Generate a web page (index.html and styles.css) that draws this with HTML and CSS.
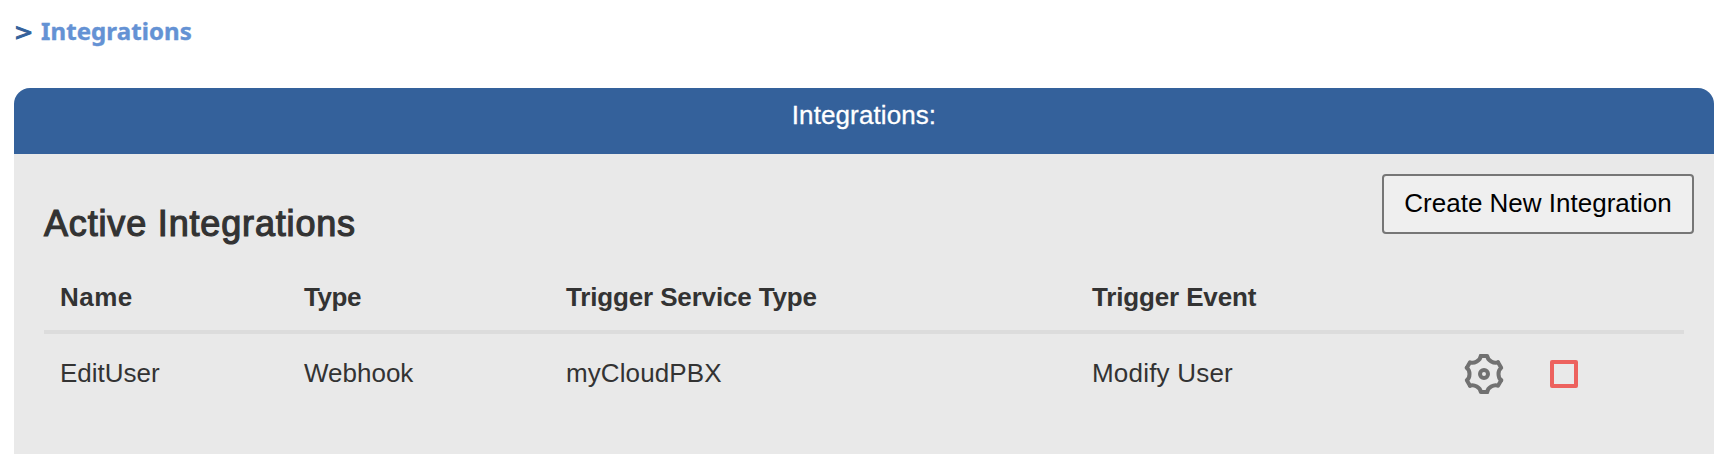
FILE: index.html
```html
<!DOCTYPE html>
<html lang="en">
<head>
<meta charset="utf-8">
<title>Integrations</title>
<link rel="stylesheet" href="styles.css">
</head>
<body>
<nav class="breadcrumb"><span class="sep">&gt;</span><a class="crumb">Integrations</a></nav>
<main class="panel">
  <header class="panel-header"><span class="panel-title">Integrations:</span></header>
  <section class="panel-body">
    <div class="toolbar">
      <h2 class="heading">Active Integrations</h2>
      <button class="create"><span class="create-label">Create New Integration</span></button>
    </div>
    <div class="table">
      <div class="row head">
        <span class="h-name">Name</span><span class="h-type">Type</span><span class="h-service">Trigger Service Type</span><span class="h-event">Trigger Event</span>
      </div>
      <div class="row item">
        <span class="c-name">EditUser</span><span class="c-type">Webhook</span><span class="c-service">myCloudPBX</span><span class="c-event">Modify User</span>
        <div class="actions">
          <svg class="gear" viewBox="-20 -20 40 40">
            <defs><path id="tooth" d="M-3.2-18H3.2C3.6-13.6 10-9.96 13.99-11.77"/></defs>
            <use href="#tooth"/><use href="#tooth" transform="rotate(60)"/><use href="#tooth" transform="rotate(120)"/><use href="#tooth" transform="rotate(180)"/><use href="#tooth" transform="rotate(240)"/><use href="#tooth" transform="rotate(300)"/>
            <circle r="4"/>
          </svg>
          <span class="stop"></span>
        </div>
      </div>
    </div>
  </section>
</main>
</body>
</html>
```
FILE: styles.css
```css
* { box-sizing: border-box; }
body {
  margin: 0;
  background: #fff;
  color: #333;
  font: 26px/36px "Liberation Sans", Arial, sans-serif;
}
.breadcrumb {
  display: flex;
  height: 88px;
  padding: 13px 0 0 14px;
  font: bold 24px/36px "Noto Sans", Tahoma, sans-serif;
}
.sep {
  width: 27px;
  padding-top: 1px;
  color: #34619b;
  font-family: "DejaVu Sans", sans-serif;
  font-size: 23px;
  font-weight: 400;
  -webkit-text-stroke: 1px #34619b;
}
.crumb { color: #6492d4; letter-spacing: 0.1px; -webkit-text-stroke: 0.4px #6492d4; }
.panel { width: 1700px; margin-left: 14px; }
.panel-header {
  height: 66px;
  padding-top: 9px;
  border-radius: 16px 16px 0 0;
  background: #34619b;
  color: #fff;
  text-align: center;
}
.panel-title { letter-spacing: 0.1px; -webkit-text-stroke: 0.3px #fff; }
.panel-body { height: 300px; padding: 20px 20px 0 30px; background: #e9e9e9; }
.toolbar { display: flex; justify-content: space-between; height: 96px; }
.heading {
  margin: 28px 0 0;
  font-size: 36px;
  font-weight: 400;
  line-height: 44px;
  letter-spacing: 0.83px;
  -webkit-text-stroke: 1.2px #333;
}
.create {
  width: 312px;
  height: 60px;
  padding: 0 0 2px;
  border: 2px solid #767676;
  border-radius: 4px;
  background: #efefef;
  color: #000;
  font: inherit;
  white-space: nowrap;
}
.table { width: 1640px; }
.row {
  display: grid;
  grid-template-columns: 244px 262px 526px 372px 1fr;
  padding-left: 16px;
  white-space: nowrap;
}
.head { height: 64px; padding-top: 9px; border-bottom: 4px solid #dcdcdc; font-weight: 700; }
.h-name { letter-spacing: 0.5px; }
.h-type { letter-spacing: -0.4px; }
.h-service, .h-event { letter-spacing: -0.15px; }
.item { padding-top: 21px; }
.c-service { letter-spacing: 0.1px; }
.c-event { letter-spacing: 0.2px; }
.actions { display: flex; align-items: center; gap: 46px; height: 38px; }
.gear { width: 40px; height: 40px; fill: none; stroke: #717171; stroke-width: 4; stroke-linejoin: round; stroke-linecap: round; }
.stop { width: 28px; height: 28px; border: 4px solid #ed625e; border-radius: 2px; }
```
